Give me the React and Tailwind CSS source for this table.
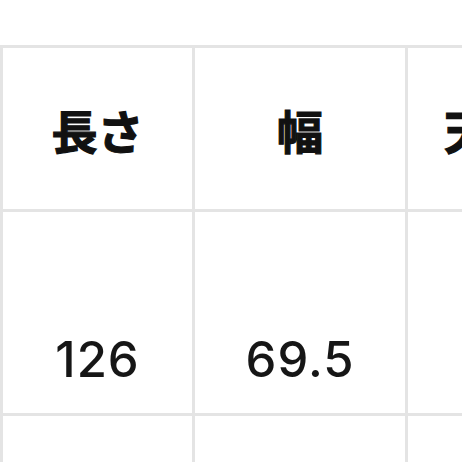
import React from "react";

const heads = ["長さ", "幅", "天地高"];
const vals = ["126", "69.5", "24.5"];

export default function App() {
  return (
    <div className="w-[462px] h-[462px] overflow-hidden bg-white">
      <div className="h-[45px]" />
      <div className="grid grid-cols-[189px_210px_210px] grid-rows-[161px_201px_60px] gap-[3px] pt-[3px] pl-[3px] bg-[#e4e4e4] w-max">
        {heads.map((h) => (
          <div
            key={h}
            className="bg-white flex items-center justify-center text-[46px] font-bold text-[#111] leading-none whitespace-nowrap [-webkit-text-stroke:1.2px_#111]"
            style={{ fontFamily: '"Noto Sans CJK JP", sans-serif' }}
          >
            {h}
          </div>
        ))}
        {vals.map((v) => (
          <div
            key={v}
            className="bg-white flex items-center justify-center pt-[94px] text-[49px] font-medium tracking-[0.02em] text-[#161616] leading-none"
            style={{ fontFamily: 'Inter, "Liberation Sans", sans-serif' }}
          >
            {v}
          </div>
        ))}
        <div className="bg-white" />
        <div className="bg-white" />
        <div className="bg-white" />
      </div>
    </div>
  );
}
